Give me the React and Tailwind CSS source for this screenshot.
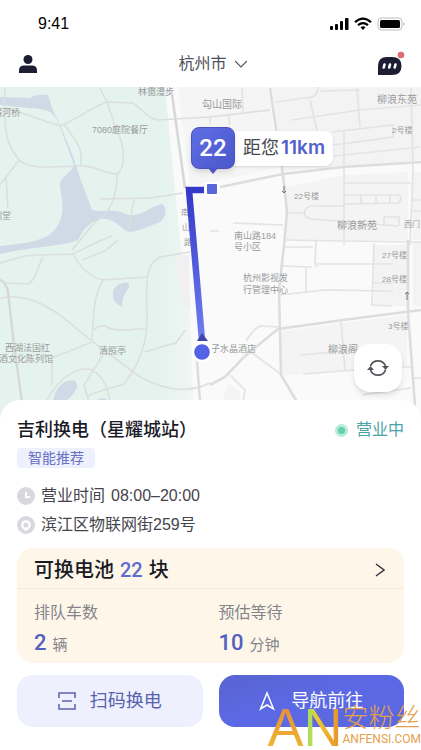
const roads = [
  "M5 88C4 100 4 128 8 140S17 157 19 160L0 185",
  "M6 178L8 208",
  "M18 160C30 168 40 168 73 166C95 164 105 174 117 174C126 168 125 145 117 132L107 102L100 88",
  "M0 108C20 110 45 122 60 126C80 118 90 108 107 102L133 103C143 110 148 119 158 120L210 117L270 110",
  "M64 124C72 136 81 145 81 155V166",
  "M117 174C117 200 108 215 95 222L72 250",
  "M100 199L150 198L183 193",
  "M134 200L128 230",
  "M0 263L25 256C45 254 58 255 73 254C80 268 92 278 103 280L146 277",
  "M73 254L95 243L112 236M82 260L105 251L118 240",
  "M43 257C38 266 36 280 28 284L6 283",
  "M0 298C25 294 40 302 60 315L93 342L140 377C160 388 185 395 210 383",
  "M103 280C94 295 94 310 92 340",
  "M94 330C98 326 103 325 107 327C115 332 130 330 147 328",
  "M190 252L160 257C145 265 146 280 147 320C147 350 135 370 124 384C116 387 100 390 88 396",
  "M145 352L168 345L176 343L185 330",
  "M92 342L52 358V385",
  "M103 355L84 385L89 402",
  "M46 402C60 375 80 366 92 370C105 378 108 390 110 402",
];

const streets = [
  "M275 102L305 98C313 98 318 95 318 87M320 91L360 90",
  "M310 100L317 131M292 120L360 110L421 105M357 88L360 127",
  "M242 88L243 112M210 117V125M228 114L230 125",
  "M332 132L393 125V137L333 145M344 131V245M334 156L420 147",
  "M411 88L413 165L412 200L410 245",
  "M345 183H411M345 195H398Q404 198 398 203L345 204M361 196V204M376 196V204M390 196V204",
  "M285 213H304Q306 206 312 206H344M304 213Q305 218 312 219L398 226M384 217H399V226M384 217V226M413 200H421M413 211H421",
  "M233 223L283 225M210 231H219M284 240L345 241L421 242",
  "M283 247H313M316 241L315 264L317 267M283 266L312 267M317 264H393M306 268V291",
  "M279 295L325 290L393 291M374 244L372 305L392 306M374 283H393",
  "M246 341Q256 325 263 326L279 327M248 350L282 375",
  "M230 375L245 390L243 402",
  "M341 321L345 370M303 374L355 370M300 355L357 350M400 367H411M362 395L411 388M414 378H421",
];

const labels = [
  [138, 95, 9, "林霭漫步"],
  [-7, 116, 9, "横河桥"],
  [92, 133, 9, "7080庭院餐厅"],
  [-7, 219, 9, "圳堂"],
  [202, 108, 10, "勾山国际"],
  [377, 103, 10, "柳浪东苑"],
  [392, 133, 8, "2号楼"],
  [294, 199, 8, "22号楼"],
  [337, 229, 10, "柳浪新苑"],
  [404, 227, 8, "西门"],
  [234, 239, 9, "南山路184"],
  [234, 250, 9, "号小区"],
  [382, 258, 8, "27号楼"],
  [382, 282, 8, "28号楼"],
  [243, 281, 9, "杭州影视发"],
  [243, 293, 9, "行管理中心"],
  [388, 329, 8, "3号楼"],
  [328, 353, 10, "柳浪阁"],
  [211, 352, 9, "子水晶酒店"],
  [5, 351, 9, "西湖法国红"],
  [-1, 362, 9, "酒文化陈列馆"],
  [99, 354, 9, "清照亭"],
  [181, 215, 8, "南"],
  [182, 230, 8, "山"],
  [184, 245, 8, "路"],
];

function CityMap() {
  return (
    <svg viewBox="0 87 421 333" className="block w-full" role="img" aria-label="地图">
      <defs>
        <linearGradient id="route" x1="0" y1="188" x2="0" y2="345" gradientUnits="userSpaceOnUse">
          <stop offset="0" stopColor="#3239c8" />
          <stop offset="1" stopColor="#7480f0" />
        </linearGradient>
        <linearGradient id="park" x1="0" x2="1" y1="0" y2="0">
          <stop offset="0.84" stopColor="#e5f3ee" />
          <stop offset="1" stopColor="#f0f6f3" />
        </linearGradient>
      </defs>
      <rect y="87" width="421" height="333" fill="#fafafa" />
      <path d="M178 87H268L279 168L190 186Z" fill="#f5f5f5" />
      <path d="M272 87H421V160L283 171Z" fill="#f3f3f4" />
      <path d="M286 187L345 175L408 172V240L286 241Z" fill="#f4f4f5" />
      <path d="M374 245H407V306H374ZM413 242H421V306H413ZM413 172H421V240H413Z" fill="#f3f3f4" />
      <path d="M281 331L407 315V366L281 376ZM228 383L240 392V402H222Z" fill="#f4f4f4" />
      <path d="M0 87H165L180 240L190 310L194 420H0Z" fill="url(#park)" />
      <path d="M177 255H189L190 310H187Q177 290 177 255Z" fill="#f1efef" />
      <g fill="#cedae6">
        <path d="M0 97L30 98Q35 94 48 95L52 108C60 125 72 150 80 178L92 210C105 213 115 208 125 214C140 219 150 206 162 204C168 208 166 217 160 222C148 226 135 234 126 231C118 225 112 217 100 219C90 222 84 228 78 240C65 246 30 247 0 254V246C30 243 48 240 56 228C68 212 60 195 60 183C63 175 72 172 74 165C68 150 64 135 56 118C50 110 45 109 28 108L0 105Z" />
        <path d="M113 292C115 284 126 280 129 284C131 289 122 292 122 307C115 303 112 299 113 292Z" />
        <path d="M53 401C55 388 65 377 75 381C81 387 72 396 65 402Z" />
        <path d="M97 400Q102 396 107 400Z" />
      </g>
      <g fill="none" stroke="#dbdfdd" strokeWidth="1.6">
        {roads.map((d) => <path key={d} d={d} />)}
      </g>
      <path d="M0 280Q6 282 8 292L14 345L22 402" fill="none" stroke="#d5d8d7" strokeWidth="2.4" />
      <g fill="none" stroke="#e2e3e3" strokeWidth="1.7">
        {streets.map((d) => <path key={d} d={d} />)}
      </g>
      <g fill="none" stroke="#dcdedd" strokeWidth="2.6">
        <path d="M270 88L283 175L287 212L284 245L279 290L281 375L297 402" />
        <path d="M220 187L283 174L343 167L421 162" />
        <path d="M210 385L225 377L245 356L278 329L343 320L421 310" />
        <path d="M408 240V312L415 406M197 360L200 402" />
        <path d="M172 94L185 188" stroke="#d6dad2" />
      </g>
      <g fill="#999b9d" className="font-['Liberation_Sans','Noto_Sans_CJK_SC',sans-serif]">
        {labels.map(([x, y, size, text]) => (
          <text key={text + y} x={x} y={y} fontSize={size}>{text}</text>
        ))}
      </g>
      <path d="M284 186V193M282 191L284 193L286 191M407 300V292M405 294L407 292L409 294" fill="none" stroke="#777" />
      <path d="M204 190H189L202 340" fill="none" stroke="url(#route)" strokeWidth="6.5" />
      <rect x="205" y="182" width="14" height="14" rx="2" fill="#fff" />
      <rect x="207" y="184" width="10" height="10" rx="1" fill="#5965dd" />
      <path d="M197 341L202 333L208 341Z" fill="#4145a4" />
      <circle cx="202" cy="352" r="10.5" fill="#fff" />
      <circle cx="202" cy="352" r="7.8" fill="#5462e5" />
    </svg>
  );
}

function StatusBar() {
  return (
    <div className="flex h-10 items-center justify-between pt-2 pr-4 pl-[38px]">
      <span className="text-base leading-5 text-black">9:41</span>
      <svg width="76" height="14" viewBox="0 0 76 14" aria-hidden="true">
        <rect x="1" y="9" width="3" height="4" rx="1" />
        <rect x="6" y="7" width="3" height="6" rx="1" />
        <rect x="11" y="4" width="3" height="9" rx="1" />
        <rect x="16" y="1" width="3.5" height="12" rx="1" />
        <g fill="none" stroke="#000" strokeWidth="2.2">
          <path d="M26 5.2Q34 -2 42 5.2" />
          <path d="M29 8.2Q34 4 39 8.2" />
        </g>
        <path d="M31.5 10.2Q34 8.2 36.500 10.2L34 13Z" />
        <rect x="49" y="1" width="24" height="12" rx="3.5" fill="none" stroke="#bbb" />
        <rect x="51" y="3" width="20" height="8" rx="1.5" />
        <path d="M74.5 5Q77 7 74.5 9Z" fill="#bbb" />
      </svg>
    </div>
  );
}

function NavBar() {
  return (
    <header className="flex h-[47px] items-center justify-between px-4 text-[#1d1d33]">
      <button type="button" aria-label="个人中心" className="flex w-8 pl-[3px]">
        <svg width="18" height="18" viewBox="0 0 18 18" fill="currentColor">
          <circle cx="9" cy="4.5" r="4.5" />
          <path d="M0 18V15.5Q0 10.5 5 10.5H13Q18 10.5 18 15.5V18Z" />
        </svg>
      </button>
      <button type="button" className="flex items-center gap-2 pl-1 text-base leading-6 text-[#505058]">
        杭州市
        <svg width="12" height="8" viewBox="0 0 12 8" fill="none" stroke="currentColor" strokeWidth="1.1">
          <path d="M0 1L6 7L12 1" />
        </svg>
      </button>
      <button type="button" aria-label="消息" className="flex w-8 justify-end">
        <svg width="28" height="26" viewBox="0 0 28 26">
          <path d="M1 24V15Q1 6 10 6H15Q24.5 6 24.5 15T15 24Z" fill="currentColor" />
          <path d="M7.5 13.5L6.7 16.5M13 13.5L12.2 16.5M18.5 13.5L17.7 16.5" stroke="#fff" strokeWidth="2.6" strokeLinecap="round" />
          <circle cx="24" cy="4" r="3.3" fill="#df6c74" />
        </svg>
      </button>
    </header>
  );
}

function StationMarker() {
  return (
    <div className="absolute top-10 left-[191px] flex items-center">
      <div className="relative z-10 flex h-[42px] w-11 items-center justify-center rounded-lg border border-[#4b53bd] bg-linear-to-br from-[#606ee4] to-[#4b57cb] font-[Roboto] text-2xl font-medium text-white shadow-md">
        22
        <span className="absolute -bottom-[6px] left-4 border-x-[5px] border-t-[6px] border-x-transparent border-t-[#4b55c5]" />
      </div>
      <div className="-ml-2 flex h-[35px] items-center gap-[2px] rounded-lg bg-white pr-2 pl-4 text-lg text-[#484850] shadow-sm">
        距您
        <span className="font-[Inter] text-[19px] font-semibold text-[#5361cb]">11km</span>
      </div>
    </div>
  );
}

function Queue({ label, value, unit }) {
  return (
    <div>
      <dt className="text-base leading-6">{label}</dt>
      <dd className="mt-1 flex items-baseline gap-[6px] text-[15px] leading-7">
        <span className="font-[Roboto] text-[22px] font-medium text-[#5260c0]">{value}</span>
        {unit}
      </dd>
    </div>
  );
}

function StationSheet() {
  return (
    <main className="relative -mt-5 rounded-t-[20px] bg-white px-[17px] pt-4 pb-[23px]">
      <div className="flex items-center justify-between">
        <h1 className="text-lg leading-7 font-medium text-[#1b1b28]">吉利换电（星耀城站）</h1>
        <span className="flex items-center gap-2 text-base leading-7 text-[#4aa3a7]">
          <span className="size-[13px] rounded-full border-[3px] border-[#b5ebd9] bg-[#66cfae]" />
          营业中
        </span>
      </div>
      <span className="mt-1 flex h-5 w-fit items-center rounded-sm bg-[#eff0fd] px-[11px] text-sm text-[#6670c4]">智能推荐</span>

      <div className="mt-4 space-y-[5px] text-base leading-6 text-[#45454d]">
        <p className="flex items-center gap-[6px]">
          <svg width="18" height="18" viewBox="0 0 18 18" aria-hidden="true">
            <circle cx="9" cy="9" r="9" fill="#d8d8df" />
            <path d="M9 5V10H13" fill="none" stroke="#fff" strokeWidth="1.8" />
          </svg>
          <span>营业时间</span>
          <span>08:00–20:00</span>
        </p>
        <p className="flex items-center gap-[6px]">
          <svg width="18" height="18" viewBox="0 0 18 18" aria-hidden="true">
            <circle cx="9" cy="9" r="9" fill="#d8d8df" />
            <path d="M9 15.5L6 12.5H12Z" fill="#fff" />
            <circle cx="9" cy="9" r="3.7" fill="#d8d8df" stroke="#fff" strokeWidth="2.2" />
          </svg>
          滨江区物联网街259号
        </p>
      </div>

      <section className="mt-[11px] rounded-2xl bg-[#fdf6e9]">
        <button type="button" className="flex w-full items-center justify-between border-b border-[#fbeadb] pt-2 pb-1 pr-[19px] pl-[17px] text-xl leading-7 font-medium text-[#1b1b24]">
          <span className="flex items-center gap-[6px]">
            可换电池
            <span className="font-[Roboto] text-[#5f6bd0]">22</span>
            块
          </span>
          <svg width="10" height="14" viewBox="0 0 10 14" fill="none" stroke="#33333b" strokeWidth="1.4" aria-hidden="true">
            <path d="M1 1L9 7L1 13" />
          </svg>
        </button>
        <dl className="grid grid-cols-2 gap-4 px-[17px] pt-3 pb-1 text-[#84848a]">
          <Queue label="排队车数" value="2" unit="辆" />
          <Queue label="预估等待" value="10" unit="分钟" />
        </dl>
      </section>

      <div className="mt-3 grid grid-cols-2 gap-4">
        <button type="button" className="flex h-[52px] items-center justify-center gap-[14px] rounded-2xl bg-[#eef0fd] text-lg text-[#5962ad]">
          <svg width="18" height="18" viewBox="0 0 18 18" fill="none" stroke="currentColor" strokeWidth="1.5" aria-hidden="true">
            <path d="M1 6V1H17V6M1 12V17H17V12M4 9H14" />
          </svg>
          扫码换电
        </button>
        <button type="button" className="flex h-[52px] items-center justify-center gap-4 rounded-2xl bg-linear-to-br from-[#5864cf] via-[#5c69e6] to-[#5b67dd] text-lg text-white">
          <svg width="16" height="20" viewBox="0 0 16 20" fill="none" stroke="currentColor" strokeWidth="1.5" aria-hidden="true">
            <path d="M8 2L1.5 18L8 14L14.5 18Z" />
          </svg>
          导航前往
        </button>
      </div>
    </main>
  );
}

function Watermark() {
  return (
    <div className="pointer-events-none absolute right-0 bottom-0 flex items-end text-[#e6a04c]">
      <span className="flex text-[54px] leading-[46px]">
        <span className="bg-linear-to-t from-[#f0b82c] to-[#e58a3c] bg-clip-text text-transparent">A</span>
        <span className="bg-linear-to-r from-[#a8e05c] from-15% via-[#f2c62c] via-35% to-[#e58a2c] bg-clip-text text-transparent">N</span>
      </span>
      <span className="flex flex-col pb-1">
        <span className="text-[26px] leading-7 font-light">安粉丝</span>
        <span className="font-[Roboto] text-xs leading-[14px]">ANFENSI.COM</span>
      </span>
    </div>
  );
}

export default function App() {
  return (
    <div className="relative min-h-screen overflow-hidden bg-white font-['Liberation_Sans','Noto_Sans_CJK_SC',sans-serif]">
      <StatusBar />
      <NavBar />
      <div className="relative">
        <CityMap />
        <StationMarker />
        <button type="button" aria-label="刷新" className="absolute right-[19px] bottom-7 flex size-12 items-center justify-center rounded-2xl bg-white shadow-md">
          <svg width="22" height="20" viewBox="0 0 22 20" fill="none" stroke="#55555b" strokeWidth="1.8">
            <path d="M3.5 8A8 8 0 0 1 18.5 8M18.5 12A8 8 0 0 1 3.5 12" />
            <path d="M0 12L3.5 8L7 12ZM15 8L18.5 12L22 8Z" fill="#55555b" stroke="none" />
          </svg>
        </button>
      </div>
      <StationSheet />
      <Watermark />
    </div>
  );
}
